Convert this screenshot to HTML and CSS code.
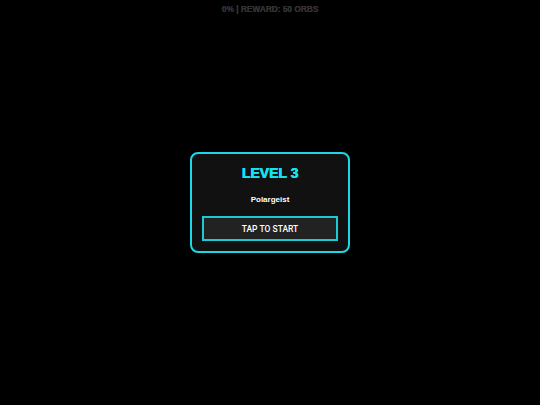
FILE: index.html
```html
<!DOCTYPE html>
<html>
<head>
<meta charset="utf-8">
<link rel="stylesheet" href="styles.css">
</head>
<body>
<div class="hud">0% | REWARD: 50 ORBS</div>
<main class="stage">
  <section class="card">
    <h1 class="title">LEVEL 3</h1>
    <p class="subtitle">Polargeist</p>
    <button class="start">TAP TO START</button>
  </section>
</main>
</body>
</html>
```

FILE: styles.css
```css
html, body {
  margin: 0;
  padding: 0;
  background: #000;
  width: 540px;
  height: 405px;
  overflow: hidden;
  font-family: "Liberation Sans", Arial, sans-serif;
}
.hud {
  position: absolute;
  top: 4px;
  left: 0;
  right: 0;
  text-align: center;
  color: #333;
  font-weight: bold;
  font-size: 8.3px;
  line-height: 10px;
  text-shadow: 0.3px 0 0 #333;
}
.stage {
  height: 405px;
  display: flex;
  align-items: center;
  justify-content: center;
}
.card {
  box-sizing: border-box;
  width: 160px;
  height: 101px;
  padding: 10px;
  background: #111;
  border: 2px solid #1ad8e6;
  border-radius: 8px;
  display: flex;
  flex-direction: column;
  align-items: center;
}
.title {
  margin: 0;
  font-size: 14px;
  line-height: 18px;
  font-weight: 900;
  color: #12e3f0;
  text-shadow: 0 0 0.6px #12e3f0, 0.5px 0 0 #12e3f0;
}
.subtitle {
  margin: 13px 0 0;
  font-size: 8px;
  line-height: 10px;
  font-weight: bold;
  color: #fff;
}
.start {
  margin-top: 11px;
  box-sizing: border-box;
  width: 136px;
  height: 25px;
  background: #222;
  border: 2px solid #20c8d6;
  color: #fff;
  font-family: Roboto, "Liberation Sans", sans-serif;
  font-size: 8.5px;
  font-weight: 500;
  padding: 0;
}
```
